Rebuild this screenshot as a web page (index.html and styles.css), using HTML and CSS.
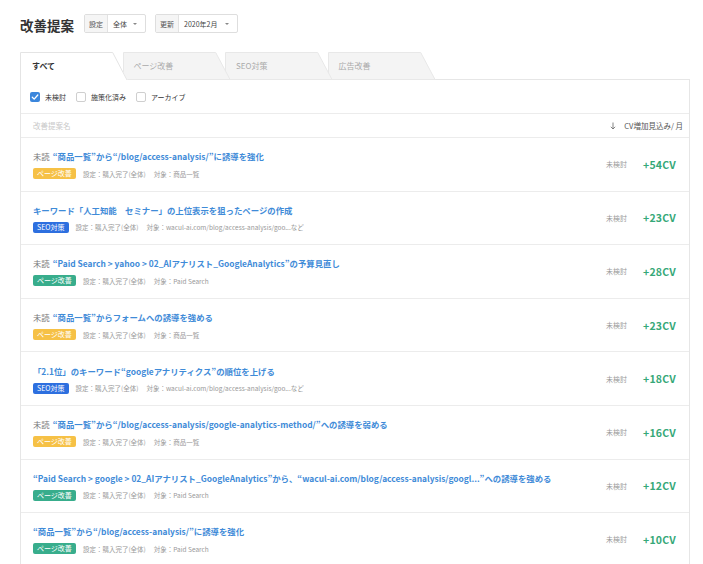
FILE: index.html
```html
<!DOCTYPE html>
<html lang="ja">
<head>
<meta charset="utf-8">
<title>改善提案</title>
<link rel="stylesheet" href="styles.css">
</head>
<body>
<div class="page">
  <div class="top">
    <h1 class="title">改善提案</h1>
    <div class="dd dd-scope">
      <span class="dd-label">設定</span>
      <span class="dd-value">全体</span>
      <span class="caret"></span>
    </div>
    <div class="dd dd-date">
      <span class="dd-label">更新</span>
      <span class="dd-value">2020年2月</span>
      <span class="caret"></span>
    </div>
  </div>

  <div class="tabs">
    <div class="tab tab-active z4">
      <svg class="tab-shape" width="108" height="28" viewBox="0 0 108 28"><polygon points="0,0 93,0 107.5,28 0,28" fill="#fff"/><polyline points="0.5,28 0.5,0.5 92.7,0.5 107,28" fill="none" stroke="#e4e4e4" stroke-width="1"/></svg>
      <span class="tab-label">すべて</span>
    </div>
    <div class="tab z3">
      <svg class="tab-shape" width="108" height="28" viewBox="0 0 108 28"><polygon points="0.5,27.5 0.5,0.5 92.7,0.5 107,27.5" fill="#f4f4f4" stroke="#e8e8e8" stroke-width="1"/></svg>
      <span class="tab-label">ページ改善</span>
    </div>
    <div class="tab z2">
      <svg class="tab-shape" width="108" height="28" viewBox="0 0 108 28"><polygon points="0.5,27.5 0.5,0.5 92.7,0.5 107,27.5" fill="#f4f4f4" stroke="#e8e8e8" stroke-width="1"/></svg>
      <span class="tab-label">SEO対策</span>
    </div>
    <div class="tab z1">
      <svg class="tab-shape" width="108" height="28" viewBox="0 0 108 28"><polygon points="0.5,27.5 0.5,0.5 92.7,0.5 107,27.5" fill="#f4f4f4" stroke="#e8e8e8" stroke-width="1"/></svg>
      <span class="tab-label">広告改善</span>
    </div>
  </div>

  <div class="panel">
    <div class="filters">
      <label class="check">
        <span class="box box-on"><svg width="10" height="10" viewBox="0 0 10 10"><polyline points="2.3,5.2 4.2,7.1 7.8,3" fill="none" stroke="#fff" stroke-width="1.3" stroke-linecap="round" stroke-linejoin="round"/></svg></span>
        <span class="check-label">未検討</span>
      </label>
      <label class="check">
        <span class="box"></span>
        <span class="check-label">施策化済み</span>
      </label>
      <label class="check">
        <span class="box"></span>
        <span class="check-label">アーカイブ</span>
      </label>
    </div>

    <div class="list-head">
      <span class="head-name">改善提案名</span>
      <span class="head-sort"><svg class="sort-arrow" width="6" height="8" viewBox="0 0 6 8"><path d="M3 0.5 V7 M0.8 4.8 L3 7 L5.2 4.8" fill="none" stroke="#666" stroke-width="0.8"/></svg>CV増加見込み/ 月</span>
    </div>

    <div class="row">
      <div class="row-main">
        <div class="row-title"><span class="unread">未読</span>“商品一覧”から“/blog/access-analysis/”に誘導を強化</div>
        <div class="row-meta"><span class="tag tag-yellow">ページ改善</span><span class="meta">設定：購入完了(全体)</span><span class="meta">対象：商品一覧</span></div>
      </div>
      <span class="status">未検討</span><span class="cv">+54CV</span>
    </div>

    <div class="row">
      <div class="row-main">
        <div class="row-title">キーワード「人工知能　セミナー」の上位表示を狙ったページの作成</div>
        <div class="row-meta"><span class="tag tag-blue">SEO対策</span><span class="meta">設定：購入完了(全体)</span><span class="meta">対象：wacul-ai.com/blog/access-analysis/goo...など</span></div>
      </div>
      <span class="status">未検討</span><span class="cv">+23CV</span>
    </div>

    <div class="row">
      <div class="row-main">
        <div class="row-title"><span class="unread">未読</span>“Paid Search &gt; yahoo &gt; 02_AIアナリスト_GoogleAnalytics”の予算見直し</div>
        <div class="row-meta"><span class="tag tag-green">ページ改善</span><span class="meta">設定：購入完了(全体)</span><span class="meta">対象：Paid Search</span></div>
      </div>
      <span class="status">未検討</span><span class="cv">+28CV</span>
    </div>

    <div class="row">
      <div class="row-main">
        <div class="row-title"><span class="unread">未読</span>“商品一覧”からフォームへの誘導を強める</div>
        <div class="row-meta"><span class="tag tag-yellow">ページ改善</span><span class="meta">設定：購入完了(全体)</span><span class="meta">対象：商品一覧</span></div>
      </div>
      <span class="status">未検討</span><span class="cv">+23CV</span>
    </div>

    <div class="row">
      <div class="row-main">
        <div class="row-title">「2.1位」のキーワード“googleアナリティクス”の順位を上げる</div>
        <div class="row-meta"><span class="tag tag-blue">SEO対策</span><span class="meta">設定：購入完了(全体)</span><span class="meta">対象：wacul-ai.com/blog/access-analysis/goo...など</span></div>
      </div>
      <span class="status">未検討</span><span class="cv">+18CV</span>
    </div>

    <div class="row">
      <div class="row-main">
        <div class="row-title"><span class="unread">未読</span>“商品一覧”から“/blog/access-analysis/google-analytics-method/”への誘導を弱める</div>
        <div class="row-meta"><span class="tag tag-yellow">ページ改善</span><span class="meta">設定：購入完了(全体)</span><span class="meta">対象：商品一覧</span></div>
      </div>
      <span class="status">未検討</span><span class="cv">+16CV</span>
    </div>

    <div class="row">
      <div class="row-main">
        <div class="row-title">“Paid Search &gt; google &gt; 02_AIアナリスト_GoogleAnalytics”から、“wacul-ai.com/blog/access-analysis/googl...”への誘導を強める</div>
        <div class="row-meta"><span class="tag tag-green">ページ改善</span><span class="meta">設定：購入完了(全体)</span><span class="meta">対象：Paid Search</span></div>
      </div>
      <span class="status">未検討</span><span class="cv">+12CV</span>
    </div>

    <div class="row">
      <div class="row-main">
        <div class="row-title">“商品一覧”から“/blog/access-analysis/”に誘導を強化</div>
        <div class="row-meta"><span class="tag tag-green">ページ改善</span><span class="meta">設定：購入完了(全体)</span><span class="meta">対象：Paid Search</span></div>
      </div>
      <span class="status">未検討</span><span class="cv">+10CV</span>
    </div>
  </div>
</div>
</body>
</html>
```
FILE: styles.css
```css
* { box-sizing: border-box; margin: 0; padding: 0; }

html, body {
  background: #fff;
  overflow: hidden;
}

body {
  font-family: "Noto Sans CJK JP", "Noto Sans", sans-serif;
  color: #333;
  width: 703px;
  height: 564px;
}

.page {
  padding: 14px 13px 0 20px;
}

/* header */
.top {
  display: flex;
  align-items: center;
  height: 19px;
}

.title {
  font-size: 13.5px;
  font-weight: 700;
  color: #333;
  line-height: 19px;
  margin: 3px 10px 0 0;
}

.dd {
  display: flex;
  align-items: center;
  height: 19px;
  border: 1px solid #dedede;
  border-radius: 2px;
  font-size: 7px;
  color: #444;
  background: #fff;
}

.dd-scope { width: 62px; }
.dd-date { width: 83px; margin-left: 9px; }

.dd-label {
  display: flex;
  align-items: center;
  justify-content: center;
  width: 23px;
  height: 100%;
  background: #f5f5f5;
  border-right: 1px solid #e2e2e2;
  color: #555;
}

.dd-value {
  padding-left: 5px;
}

.caret {
  margin: 0 8px 0 auto;
  width: 0;
  height: 0;
  border-left: 2px solid transparent;
  border-right: 2px solid transparent;
  border-top: 2.5px solid #888;
}

/* tabs */
.tabs {
  display: flex;
  margin-top: 19px;
  height: 27px;
  position: relative;
  z-index: 2;
}

.tab {
  position: relative;
  width: 107px;
  height: 27px;
  margin-right: -4.5px;
  flex: none;
}

.tab-shape {
  position: absolute;
  left: 0;
  top: 0;
}

.tab-label {
  position: relative;
  display: block;
  padding-left: 11px;
  line-height: 27px;
  font-size: 8px;
  color: #aaa;
}

.tab-active .tab-label {
  padding-left: 12px;
  color: #333;
  font-weight: 700;
}

.z4 { z-index: 4; }
.z3 { z-index: 3; }
.z2 { z-index: 2; }
.z1 { z-index: 1; }

/* panel */
.panel {
  position: relative;
  z-index: 1;
  border: 1px solid #e6e6e6;
  border-bottom: none;
}

.filters {
  display: flex;
  align-items: center;
  height: 34px;
  padding-left: 9px;
  border-bottom: 1px solid #ececec;
}

.check {
  display: flex;
  align-items: center;
  margin-right: 10px;
}

.box {
  width: 10px;
  height: 10px;
  border: 1px solid #cfcfcf;
  border-radius: 2px;
  background: #fff;
  margin-right: 5px;
  display: flex;
}

.box-on {
  border: none;
  background: #3b86dc;
}

.check-label {
  font-size: 7px;
  color: #333;
}

.list-head {
  display: flex;
  align-items: center;
  justify-content: space-between;
  height: 24px;
  padding: 0 6px 0 12px;
  border-bottom: 1px solid #ececec;
}

.head-name {
  font-size: 7.5px;
  color: #c8c8c8;
}

.head-sort {
  display: flex;
  align-items: center;
  font-size: 7.5px;
  color: #555;
}

.sort-arrow {
  margin-right: 8px;
}

/* rows */
.row {
  display: flex;
  align-items: center;
  height: 53.6px;
  padding: 0 15px 0 12px;
  border-bottom: 1px solid #ececec;
}

.row-main {
  flex: 1;
  min-width: 0;
  display: flex;
  flex-direction: column;
  gap: 5px;
  padding-top: 1px;
}

.row-title {
  font-size: 8.4px;
  line-height: 13px;
  font-weight: 700;
  color: #3f8bd8;
  white-space: nowrap;
}

.unread {
  font-weight: 400;
  color: #777;
  margin-right: 3px;
}

.row-meta {
  display: flex;
  align-items: center;
  height: 11px;
}

.tag {
  display: inline-block;
  height: 11px;
  line-height: 11px;
  padding: 0 4px;
  border-radius: 2px;
  font-size: 7px;
  color: #fff;
  margin-right: 7px;
}

.tag-yellow { background: #f6c146; }
.tag-green { background: #38ad8c; }
.tag-blue { background: #2d6fdf; }

.meta {
  font-size: 6.5px;
  color: #999;
  margin-right: 8px;
}

.status {
  font-size: 7px;
  color: #999;
  margin-right: 16px;
  flex: none;
}

.cv {
  width: 31px;
  font-size: 10.5px;
  font-weight: 700;
  letter-spacing: 0.2px;
  color: #36a878;
  flex: none;
  white-space: nowrap;
}
```
